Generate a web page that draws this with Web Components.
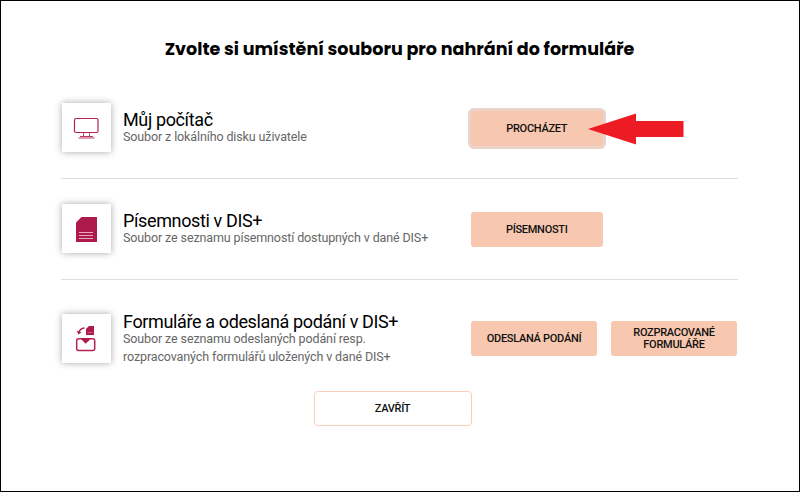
<!DOCTYPE html>
<html lang="cs">
<head>
<meta charset="utf-8">
<title>Nahrání souboru</title>
<style>
    body {
        margin: 0;
        background: #fff;
        font-family: Roboto, "Liberation Sans", sans-serif;
    }
</style>
</head>
<body>
<upload-dialog>
    <span slot="title">Zvolte si umístění souboru pro nahrání do formuláře</span>
    <source-row icon="computer">
        <span slot="name">Můj počítač</span>
        <span slot="info">Soubor z lokálního disku uživatele</span>
        <action-button slot="actions" class="wide" focused>PROCHÁZET<pointer-arrow slot="pointer"></pointer-arrow></action-button>
    </source-row>
    <source-row icon="document">
        <span slot="name">Písemnosti v DIS+</span>
        <span slot="info">Soubor ze seznamu písemností dostupných v dané DIS+</span>
        <action-button slot="actions" class="wide">PÍSEMNOSTI</action-button>
    </source-row>
    <source-row icon="envelope" last>
        <span slot="name">Formuláře a odeslaná podání v DIS+</span>
        <span slot="info">Soubor ze seznamu odeslaných podání resp.<br>rozpracovaných formulářů uložených v dané DIS+</span>
        <action-button slot="actions">ODESLANÁ PODÁNÍ</action-button>
        <action-button slot="actions">ROZPRACOVANÉ<br>FORMULÁŘE</action-button>
    </source-row>
    <action-button slot="footer" outline>ZAVŘÍT</action-button>
</upload-dialog>

<script>
const icons = {
    computer: `
        <g fill="none" stroke="#b5234f" stroke-width="1.2">
            <rect x="12.5" y="15.5" width="23.500" height="14" rx="1.5"/>
            <path d="M21.5 29.500v4M27.500 29.500v4" stroke-width="0.8"/>
            <path d="M18 33.500h13M16.500 35h16" stroke-width="0.9"/>
        </g>`,
    document: `
        <path d="M19.500 13H35v25H14V18.500z" fill="#ad1a4b"/>
        <path d="M17 28.500h14M17 31.500h14M17 34.500h14" stroke="#e3aabd" stroke-width="1"/>`,
    envelope: `
        <path d="M27 12H32v9H24V15z" fill="#ad1a4b"/>
        <path d="M25.500 18.500h5" stroke="#c75c80" stroke-width="1"/>
        <path d="M22.500 14q-4.500.3-5.700 4.500" fill="none" stroke="#ad1a4b" stroke-width="1.400"/>
        <path d="M14.800 16.800l1.600 3.600 3.200-2.200z" fill="#ad1a4b"/>
        <rect x="14.700" y="24.700" width="18" height="11.800" rx="2" fill="none" stroke="#b5234f" stroke-width="1.500"/>
        <path d="M18.500 24.500h10.500L23.700 29.700z" fill="#ad1a4b"/>`
};

class UploadDialog extends HTMLElement {
    constructor() {
        super();
        this.attachShadow({ mode: 'open' });
        this.shadowRoot.innerHTML = `
            <style>
                :host {
                    display: flex;
                    flex-direction: column;
                    box-sizing: border-box;
                    width: 800px;
                    height: 492px;
                    padding: 0 61px 0 60px;
                    border: 1px solid #000;
                    background: #fff;
                }
                h1 {
                    margin: 36px 0 17px;
                    font: 700 17.55px/24px Poppins, Inter, sans-serif;
                    text-align: center;
                    white-space: nowrap;
                    color: #000;
                }
                footer {
                    display: flex;
                    justify-content: center;
                    margin: 19px 14px 0 0;
                }
            </style>
            <h1><slot name="title"></slot></h1>
            <slot></slot>
            <footer><slot name="footer"></slot></footer>
        `;
    }
}

class SourceRow extends HTMLElement {
    constructor() {
        super();
        this.attachShadow({ mode: 'open' });
        this.shadowRoot.innerHTML = `
            <style>
                :host {
                    display: grid;
                    grid-template-columns: 50px 348px auto;
                    grid-auto-rows: minmax(50px, auto);
                    column-gap: 12px;
                    align-items: center;
                    justify-content: start;
                    padding: 25px 0;
                    border-bottom: 1px solid #dedede;
                }
                :host([last]) {
                    padding-bottom: 0;
                    border-bottom: none;
                }
                .tile {
                    width: 49px;
                    height: 49px;
                    margin: 0 0 1px 1px;
                    background: #fff;
                    box-shadow: 0 0 7px rgba(0, 0, 0, 0.34);
                }
                svg {
                    display: block;
                }
                .text {
                    padding: 6px 0 7px;
                    white-space: nowrap;
                }
                .name {
                    font-size: 18px;
                    line-height: 22px;
                    letter-spacing: -0.37px;
                    color: #000;
                }
                .info {
                    margin-top: -3px;
                    font-size: 12.5px;
                    line-height: 17.5px;
                    letter-spacing: -0.12px;
                    color: #666;
                }
                .actions {
                    display: flex;
                    gap: 14px;
                    margin-left: -12px;
                }
            </style>
            <div class="tile"><svg width="49" height="49" viewBox="0 0 49 49">${icons[this.getAttribute('icon')] || ''}</svg></div>
            <div class="text">
                <div class="name"><slot name="name"></slot></div>
                <div class="info"><slot name="info"></slot></div>
            </div>
            <div class="actions"><slot name="actions"></slot></div>
        `;
    }
}

class ActionButton extends HTMLElement {
    constructor() {
        super();
        this.attachShadow({ mode: 'open' });
        this.shadowRoot.innerHTML = `
            <style>
                :host {
                    display: block;
                    position: relative;
                    width: 126px;
                }
                :host(.wide) {
                    width: 131.5px;
                }
                :host([outline]) {
                    width: 158px;
                }
                button {
                    display: block;
                    width: 100%;
                    height: 35px;
                    padding: 1px 0 0;
                    border: none;
                    border-radius: 3px;
                    background: #f7c8af;
                    font: 500 11px/12px Roboto, "Liberation Sans", sans-serif;
                    letter-spacing: -0.28px;
                    color: #111;
                }
                :host([outline]) button {
                    padding: 0;
                    border: 1px solid #f8cfbb;
                    border-radius: 4px;
                    background: #fff;
                }
                :host([focused]) button {
                    box-shadow: 0 0 0 3px #ead3c8;
                }
            </style>
            <button type="button"><slot></slot></button>
            <slot name="pointer"></slot>
        `;
    }
}

class PointerArrow extends HTMLElement {
    constructor() {
        super();
        this.attachShadow({ mode: 'open' });
        this.shadowRoot.innerHTML = `
            <style>
                :host {
                    position: absolute;
                    left: 117px;
                    top: 2px;
                }
                svg {
                    display: block;
                }
            </style>
            <svg width="96" height="32" viewBox="0 0 96 32">
                <path d="M0 16L48 0.500V8H95.500V24H48V31.500z" fill="#ed1c24"/>
            </svg>
        `;
    }
}

customElements.define('upload-dialog', UploadDialog);
customElements.define('source-row', SourceRow);
customElements.define('action-button', ActionButton);
customElements.define('pointer-arrow', PointerArrow);
</script>
</body>
</html>
